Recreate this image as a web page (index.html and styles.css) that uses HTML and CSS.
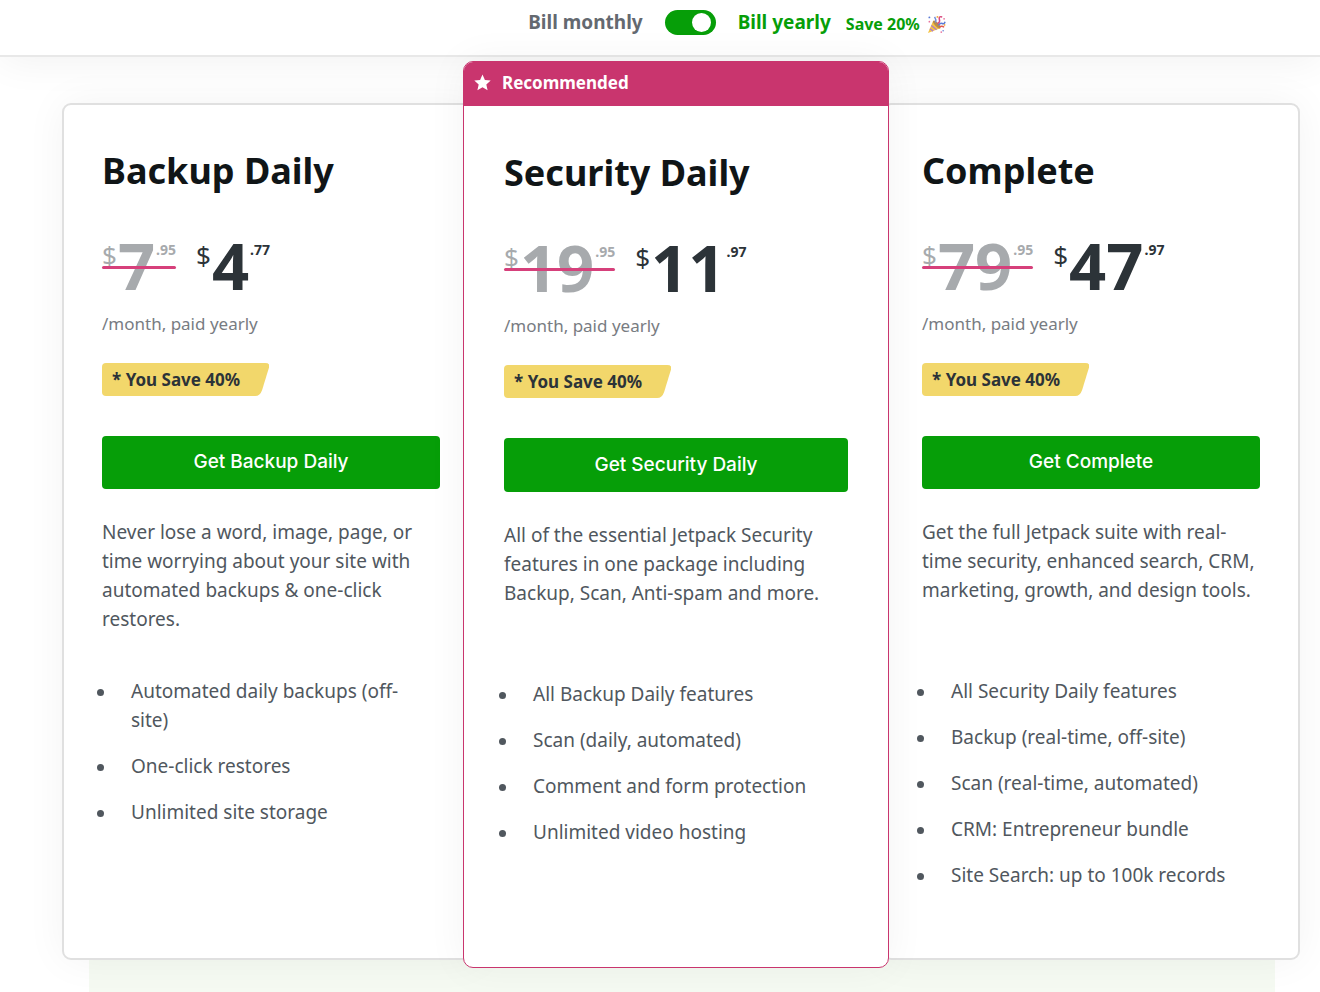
FILE: index.html
```html
<!DOCTYPE html>
<html lang="en">
<head>
  <meta charset="UTF-8" />
  <meta name="viewport" content="width=device-width, initial-scale=1.0" />
  <title>Jetpack Pricing</title>
  <link rel="stylesheet" href="styles.css">
</head>
<body>
  <!-- Billing period switch -->
  <header class="billing-bar">
    <span class="bill-monthly">Bill monthly</span>
    <input type="checkbox" id="billing" class="toggle" checked />
    <label for="billing" class="bill-yearly">Bill yearly</label>
    <span class="save">Save 20%</span>
    <svg class="party" viewBox="0 0 20 20" aria-hidden="true">
      <path d="M1 19 6.500 6 Q12 8 14 14Z" fill="#f5c344"/>
      <path d="M3 14.500 6.500 17 M4.500 11 10 15.500" stroke="#b07fc4" stroke-width="1.500"/>
      <ellipse cx="10.300" cy="10" rx="2" ry="5.300" transform="rotate(-43 10.300 10)" fill="#b98a4a"/>
      <path d="M9 8Q10 5 8 2" fill="none" stroke="#6f8fdc" stroke-width="1.600"/>
      <path d="M11 9Q14 8 13 4.500T16 2" fill="none" stroke="#d9487d" stroke-width="1.600"/>
      <path d="M12 11Q14 8 16 9T19 7" fill="none" stroke="#5b7bd5" stroke-width="1.600"/>
      <path d="M13 12.500Q16 11 18 13" fill="none" stroke="#e2574c" stroke-width="1.500"/>
      <g fill="#5b7bd5"><circle cx="2.500" cy="2.500" r="1"/><circle cx="17" cy="16.500" r="0.800"/></g>
      <g fill="#e9709b"><circle cx="2.500" cy="7" r="0.900"/><circle cx="18" cy="4" r="0.900"/><circle cx="15" cy="18" r="0.900"/></g>
      <g fill="#f0a63a"><circle cx="11" cy="2" r="1"/><circle cx="18.500" cy="10.500" r="0.900"/></g>
    </svg>
  </header>

  <main class="plans">
    <section class="card card-left">
      <div class="card-body">
        <h2>Backup Daily</h2>
        <div class="prices">
          <del class="price old"><span class="currency">$</span><span class="amount">7</span><span class="cents">.95</span></del>
          <span class="price"><span class="currency">$</span><span class="amount">4</span><span class="cents">.77</span></span>
        </div>
        <p class="period">/month, paid yearly</p>
        <div class="badge">
          <svg viewBox="0 0 167 33" preserveAspectRatio="none" aria-hidden="true"><path d="M4 0H163Q168 0 167 4L160 27Q158 33 153 33H4Q0 33 0 29V4Q0 0 4 0Z"/></svg>
          <span>* You Save 40%</span>
        </div>
        <button type="button" class="btn">Get Backup Daily</button>
        <p class="description">Never lose a word, image, page, or time worrying about your site with automated backups &amp; one-click restores.</p>
        <ul class="features">
          <li><span>Automated daily backups (off-site)</span></li>
          <li><span>One-click restores</span></li>
          <li><span>Unlimited site storage</span></li>
        </ul>
      </div>
    </section>

    <section class="card card-featured">
      <div class="ribbon">
        <svg viewBox="0 0 24 24" aria-hidden="true"><path d="M12 0.800 15.400 8.400 23.600 9.200 17.400 14.700 19.200 22.900 12 18.600 4.800 22.900 6.600 14.700 0.400 9.200 8.600 8.400Z"/></svg>
        <span>Recommended</span>
      </div>
      <div class="card-body">
        <h2>Security Daily</h2>
        <div class="prices">
          <del class="price old"><span class="currency">$</span><span class="amount">19</span><span class="cents">.95</span></del>
          <span class="price"><span class="currency">$</span><span class="amount">11</span><span class="cents">.97</span></span>
        </div>
        <p class="period">/month, paid yearly</p>
        <div class="badge">
          <svg viewBox="0 0 167 33" preserveAspectRatio="none" aria-hidden="true"><path d="M4 0H163Q168 0 167 4L160 27Q158 33 153 33H4Q0 33 0 29V4Q0 0 4 0Z"/></svg>
          <span>* You Save 40%</span>
        </div>
        <button type="button" class="btn">Get Security Daily</button>
        <p class="description">All of the essential Jetpack Security features in one package including Backup, Scan, Anti-spam and more.</p>
        <ul class="features">
          <li><span>All Backup Daily features</span></li>
          <li><span>Scan (daily, automated)</span></li>
          <li><span>Comment and form protection</span></li>
          <li><span>Unlimited video hosting</span></li>
        </ul>
      </div>
    </section>

    <section class="card card-right">
      <div class="card-body">
        <h2>Complete</h2>
        <div class="prices">
          <del class="price old"><span class="currency">$</span><span class="amount">79</span><span class="cents">.95</span></del>
          <span class="price"><span class="currency">$</span><span class="amount">47</span><span class="cents">.97</span></span>
        </div>
        <p class="period">/month, paid yearly</p>
        <div class="badge">
          <svg viewBox="0 0 167 33" preserveAspectRatio="none" aria-hidden="true"><path d="M4 0H163Q168 0 167 4L160 27Q158 33 153 33H4Q0 33 0 29V4Q0 0 4 0Z"/></svg>
          <span>* You Save 40%</span>
        </div>
        <button type="button" class="btn">Get Complete</button>
        <p class="description">Get the full Jetpack suite with real-time security, enhanced search, CRM, marketing, growth, and design tools.</p>
        <ul class="features">
          <li><span>All Security Daily features</span></li>
          <li><span>Backup (real-time, off-site)</span></li>
          <li><span>Scan (real-time, automated)</span></li>
          <li><span>CRM: Entrepreneur bundle</span></li>
          <li><span>Site Search: up to 100k records</span></li>
        </ul>
      </div>
    </section>
  </main>
  <div class="next-section"></div>
</body>
</html>
```
FILE: styles.css
```css
* { box-sizing: border-box; }
body {
  margin: 0;
  font-family: "Noto Sans", sans-serif;
  font-size: 19px;
  line-height: 29px;
  color: #50575e;
  background: #fff;
}
h2, p, ul { margin: 0; padding: 0; }

/* Billing bar */
.billing-bar {
  display: flex;
  align-items: center;
  justify-content: center;
  height: 57px;
  padding: 0 0 11px 154px;
  font-weight: bold;
  border-bottom: 2px solid #e8e8e8;
  box-shadow: 0 4px 40px rgba(0,0,0,0.06);
}
.bill-monthly { color: #646970; }
.toggle {
  appearance: none;
  display: flex;
  align-items: center;
  justify-content: flex-end;
  width: 51px;
  height: 25px;
  margin: 0 22px;
  padding: 0 5px;
  border-radius: 13px;
  background: #069e08;
  cursor: pointer;
}
.toggle::before {
  content: "";
  width: 19px;
  height: 19px;
  border-radius: 50%;
  background: #fff;
}
.toggle:not(:checked) { justify-content: flex-start; background: #a7aaad; }
.bill-yearly, .save { color: #069e08; }
.save {
  margin: 5px 7px 0 15px;
  font-size: 16px;
}
.party { width: 19px; height: 19px; margin-top: 5px; }

/* Plans */
.plans {
  position: relative;
  z-index: 1;
  display: grid;
  grid-template-columns: minmax(0, 401fr) minmax(0, 426fr) minmax(0, 411fr);
  padding: 4px 20px 0 62px;
}
.card {
  margin: 42px 0 8px;
  background: #fff;
  border: 2px solid #e0e0e0;
  border-radius: 9px;
  box-shadow: 0 0 40px rgba(0,0,0,0.05);
}
/* The outer cards run under the featured one */
.card-left { margin-right: -17px; }
.card-right { margin-left: -7px; }
.card-featured {
  z-index: 1;
  margin: 0;
  border: 1px solid #c9356e;
  border-radius: 10px;
  overflow: hidden;
}
.card-body { padding: 42px 38px 68px; }
.card-featured .card-body { padding: 43px 40px 68px; }
.ribbon {
  display: flex;
  align-items: center;
  gap: 11px;
  height: 44px;
  padding: 0 0 4px 10px;
  background: #c9356e;
  color: #fff;
  font-size: 17px;
  font-weight: bold;
}
.ribbon svg { width: 17px; height: 17px; fill: #fff; }

h2 {
  font-size: 36px;
  line-height: 48px;
  font-weight: bold;
  color: #101517;
}
.prices {
  display: flex;
  gap: 20px;
  margin-top: 39px;
}
.price {
  display: flex;
  color: #2c3338;
  font-weight: bold;
}
.old {
  position: relative;
  color: #a7aaad;
  text-decoration: none;
}
.old::after {
  content: "";
  position: absolute;
  left: 0;
  right: 0;
  top: 32px;
  height: 3px;
  border-radius: 2px;
  background: #d6407b;
}
.currency {
  margin: 4px 1px 0 0;
  font-size: 26px;
  line-height: 34px;
  font-weight: normal;
}
.amount {
  font-size: 65px;
  line-height: 62px;
}
.cents {
  margin: 8px 0 0 1px;
  font-size: 14px;
  line-height: 16px;
}
.period {
  margin-top: 13px;
  font-size: 17px;
  color: #787c82;
}
.badge {
  display: grid;
  width: max-content;
  height: 33px;
  margin-top: 25px;
  color: #2c3338;
  font-size: 17px;
  font-weight: bold;
}
.badge svg, .badge span { grid-area: 1 / 1; }
.badge svg { width: 100%; height: 33px; fill: #f2d76b; }
.badge span { z-index: 1; padding: 2px 29px 2px 10px; }
.btn {
  display: block;
  width: 100%;
  height: 53px;
  margin-top: 40px;
  padding: 0 0 2px;
  border: none;
  border-radius: 4px;
  background: #069e08;
  color: #fff;
  font-family: Inter, sans-serif;
  font-size: 19px;
  font-weight: 500;
  cursor: pointer;
}
.card-featured .btn { height: 54px; }
.description {
  min-height: 116px;
  margin-top: 29px;
}

/* Feature lists */
.features {
  display: grid;
  gap: 17px;
  margin: 43px 0 0 -5px;
  padding-right: 20px;
  list-style: none;
}
.features li { display: flex; gap: 27px; }
.features li::before {
  content: "";
  flex: none;
  width: 7px;
  height: 7px;
  margin-top: 12px;
  border-radius: 50%;
  background: #50575e;
}

.next-section {
  height: 33px;
  margin: -8px 45px 0 89px;
  background: #f5faf2;
}
```
